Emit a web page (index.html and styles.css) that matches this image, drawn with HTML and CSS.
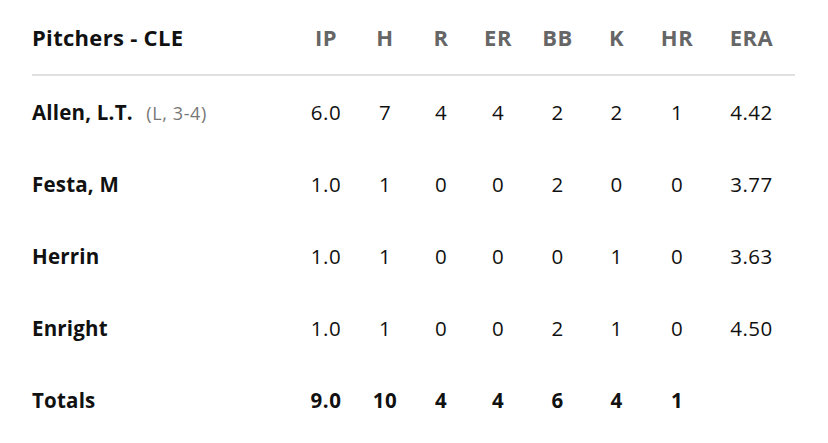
FILE: index.html
```html
<!doctype html>
<html lang="en">
	<head>
		<meta charset="utf-8">
		<title>Pitchers - CLE</title>
		<link rel="stylesheet" href="styles.css">
	</head>
	<body>
		<div class="box">
			<div class="row head">
				<div class="name">Pitchers - CLE</div>
				<div>IP</div><div>H</div><div>R</div><div>ER</div><div>BB</div><div>K</div><div>HR</div><div>ERA</div>
			</div>
			<div class="row">
				<div class="name">Allen, L.T. <span class="note">(L, 3-4)</span></div>
				<div>6.0</div><div>7</div><div>4</div><div>4</div><div>2</div><div>2</div><div>1</div><div>4.42</div>
			</div>
			<div class="row">
				<div class="name">Festa, M</div>
				<div>1.0</div><div>1</div><div>0</div><div>0</div><div>2</div><div>0</div><div>0</div><div>3.77</div>
			</div>
			<div class="row">
				<div class="name">Herrin</div>
				<div>1.0</div><div>1</div><div>0</div><div>0</div><div>0</div><div>1</div><div>0</div><div>3.63</div>
			</div>
			<div class="row">
				<div class="name">Enright</div>
				<div>1.0</div><div>1</div><div>0</div><div>0</div><div>2</div><div>1</div><div>0</div><div>4.50</div>
			</div>
			<div class="row total">
				<div class="name">Totals</div>
				<div>9.0</div><div>10</div><div>4</div><div>4</div><div>6</div><div>4</div><div>1</div><div></div>
			</div>
		</div>
	</body>
</html>
```

FILE: styles.css
```css
body { margin: 0; background: #fff; font-family: "Open Sans", "Liberation Sans", sans-serif; color: #111; }

.box { width: 763px; margin-left: 32px; }

.row {
	display: grid;
	grid-template-columns: 264px 60px 58px 54px 60px 59px 59px 62px 87px;
	align-items: center;
	height: 72px;
	font-size: 20.5px;
	letter-spacing: 0.5px;
	text-align: center;
}
.row .name { text-align: left; font-weight: bold; letter-spacing: 0.2px; }

.head {
	height: 72px;
	padding-top: 1px;
	padding-bottom: 1px;
	border-bottom: 2px solid #e0e0e0;
	box-sizing: content-box;
	font-size: 22px;
	font-weight: bold;
	color: #666;
}
.head .name { color: #111; letter-spacing: 0.3px; }

.note { font-weight: normal; font-size: 18px; letter-spacing: 0.6px; color: #777; margin-left: 8px; }

.total { font-weight: bold; }
```
